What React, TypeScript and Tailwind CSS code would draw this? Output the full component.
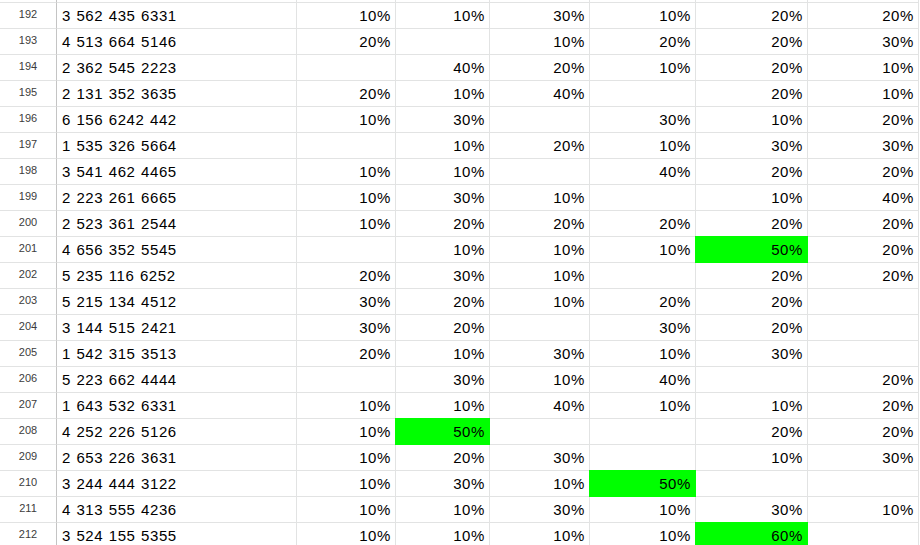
import React from "react";

type Row = { n: number; phone: string; v: (string | null)[]; green?: number };

const rows: Row[] = [
  { n: 192, phone: "3 562 435 6331", v: ["10%", "10%", "30%", "10%", "20%", "20%"] },
  { n: 193, phone: "4 513 664 5146", v: ["20%", null, "10%", "20%", "20%", "30%"] },
  { n: 194, phone: "2 362 545 2223", v: [null, "40%", "20%", "10%", "20%", "10%"] },
  { n: 195, phone: "2 131 352 3635", v: ["20%", "10%", "40%", null, "20%", "10%"] },
  { n: 196, phone: "6 156 6242 442", v: ["10%", "30%", null, "30%", "10%", "20%"] },
  { n: 197, phone: "1 535 326 5664", v: [null, "10%", "20%", "10%", "30%", "30%"] },
  { n: 198, phone: "3 541 462 4465", v: ["10%", "10%", null, "40%", "20%", "20%"] },
  { n: 199, phone: "2 223 261 6665", v: ["10%", "30%", "10%", null, "10%", "40%"] },
  { n: 200, phone: "2 523 361 2544", v: ["10%", "20%", "20%", "20%", "20%", "20%"] },
  { n: 201, phone: "4 656 352 5545", v: [null, "10%", "10%", "10%", "50%", "20%"], green: 4 },
  { n: 202, phone: "5 235 116 6252", v: ["20%", "30%", "10%", null, "20%", "20%"] },
  { n: 203, phone: "5 215 134 4512", v: ["30%", "20%", "10%", "20%", "20%", null] },
  { n: 204, phone: "3 144 515 2421", v: ["30%", "20%", null, "30%", "20%", null] },
  { n: 205, phone: "1 542 315 3513", v: ["20%", "10%", "30%", "10%", "30%", null] },
  { n: 206, phone: "5 223 662 4444", v: [null, "30%", "10%", "40%", null, "20%"] },
  { n: 207, phone: "1 643 532 6331", v: ["10%", "10%", "40%", "10%", "10%", "20%"] },
  { n: 208, phone: "4 252 226 5126", v: ["10%", "50%", null, null, "20%", "20%"], green: 1 },
  { n: 209, phone: "2 653 226 3631", v: ["10%", "20%", "30%", null, "10%", "30%"] },
  { n: 210, phone: "3 244 444 3122", v: ["10%", "30%", "10%", "50%", null, null], green: 3 },
  { n: 211, phone: "4 313 555 4236", v: ["10%", "10%", "30%", "10%", "30%", "10%"] },
  { n: 212, phone: "3 524 155 5355", v: ["10%", "10%", "10%", "10%", "60%", null], green: 4 },
];

const widths = ["w-[99px]", "w-[94px]", "w-[100px]", "w-[106px]", "w-[112px]", "w-[111px]"];

export default function App() {
  return (
    <div
      className="w-[920px] h-[545px] overflow-hidden bg-white text-black"
      style={{ fontFamily: '"Liberation Sans", Arial, sans-serif' }}
    >
      {/* partial row above */}
      <div className="flex h-[3px]">
        <div className="w-[57px] h-[3px] border-r border-b border-r-[#c4c4c4] border-b-[#e2e3e3]" />
        <div className="w-[240px] h-[3px] border-r border-b border-[#e2e3e3]" />
        {widths.map((w, i) => (
          <div key={i} className={`${w} h-[3px] border-r border-b border-[#e2e3e3]`} />
        ))}
      </div>
      {rows.map((r) => (
        <div key={r.n} className="flex h-[26px]">
          <div className="w-[57px] h-[26px] border-r border-b border-r-[#c4c4c4] border-b-[#e2e3e3] text-center text-[11px] leading-[22px] text-[#3c3c3c]">
            {r.n}
          </div>
          <div className="w-[240px] h-[26px] border-r border-b border-[#e2e3e3] pl-[5px] pt-px text-[15px] leading-[24px] tracking-[0.6px] [word-spacing:0.7px] whitespace-nowrap">
            {r.phone}
          </div>
          {r.v.map((val, i) => {
            const g = r.green === i;
            return (
              <div
                key={i}
                className={
                  g
                    ? `${widths[i]} h-[26px] border-r border-b border-[#00ff00] bg-[#00ff00] shadow-[0_-1px_0_#00ff00,-1px_0_0_#00ff00,-1px_-1px_0_#00ff00] text-right pr-[4px] pt-px text-[15px] leading-[24px] tracking-[0.6px] whitespace-nowrap`
                    : `${widths[i]} h-[26px] border-r border-b border-[#e2e3e3] text-right pr-[4px] pt-px text-[15px] leading-[24px] tracking-[0.6px] whitespace-nowrap`
                }
              >
                {val ?? ""}
              </div>
            );
          })}
        </div>
      ))}
    </div>
  );
}
